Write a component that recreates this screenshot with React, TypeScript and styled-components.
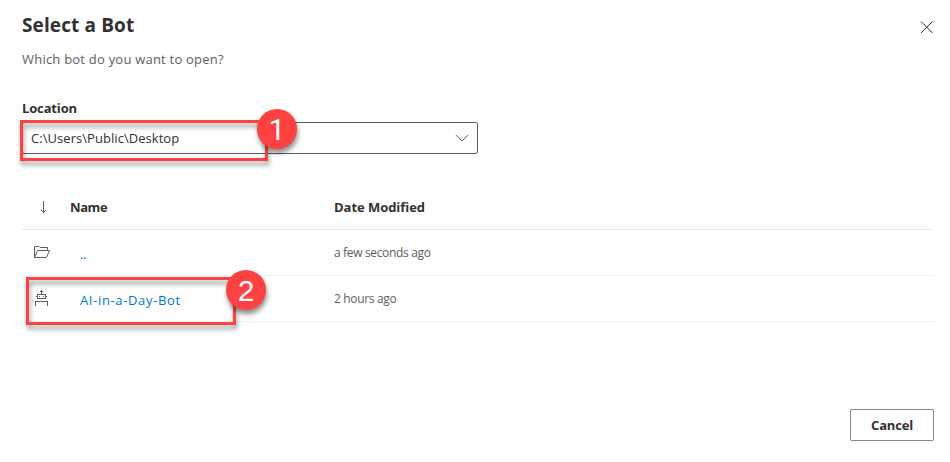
import React from "react";
import styled, { createGlobalStyle } from "styled-components";

const GlobalStyle = createGlobalStyle`
  * { box-sizing: border-box; }
  body {
    margin: 0;
    background: #fff;
    color: #323130;
    font-family: "Open Sans", "Noto Sans", sans-serif;
    font-size: 13px;
  }
`;

const Dialog = styled.main`
  width: 950px;
  height: 462px;
  padding: 11px 16px 21px 22px;
  display: flex;
  flex-direction: column;
  overflow: hidden;
`;

const Header = styled.header`
  display: flex;
  justify-content: space-between;
  height: 28px;
`;

const Title = styled.h1`
  margin: 0;
  font-size: 19px;
  line-height: 28px;
  font-weight: 700;
  letter-spacing: 0.12px;
`;

const CloseButton = styled.button`
  width: 14px;
  height: 14px;
  margin-top: 9px;
  padding: 0;
  border: 0;
  background: none;
  svg { display: block; }
`;

const Subtitle = styled.p`
  margin: 10px 0 0;
  height: 20px;
  line-height: 20px;
  font-size: 13px;
  color: #605e5c;
  letter-spacing: 0.22px;
`;

const Label = styled.label`
  margin-top: 29px;
  height: 20px;
  line-height: 20px;
  font-weight: 700;
  font-size: 13px;
  letter-spacing: -0.15px;
`;

const SelectBox = styled.div`
  position: relative;
  width: 456px;
  height: 32px;
  margin-top: 4px;
  padding: 0 8px;
  border: 1px solid #605e5c;
  border-radius: 2px;
  display: flex;
  align-items: center;
  justify-content: space-between;
  letter-spacing: 0.05px;
`;

const Table = styled.section`
  margin-top: 30px;
  display: flex;
  flex-direction: column;
`;

const Row = styled.div<{ $head?: boolean }>`
  position: relative;
  display: grid;
  grid-template-columns: ${(p) => (p.$head ? "48px 264px" : "58px 254px")} 1fr;
  align-items: center;
  height: 46px;
  border-bottom: 1px solid ${(p) => (p.$head ? "#edebe9" : "#f3f2f1")};
  font-weight: ${(p) => (p.$head ? 700 : 400)};
`;

const HeadLabel = styled.span<{ $spacing: number }>`
  letter-spacing: ${(p) => p.$spacing}px;
`;

const IconCell = styled.div<{ $inset: number; $lift?: number }>`
  padding-left: ${(p) => p.$inset}px;
  padding-bottom: ${(p) => p.$lift ?? 0}px;
  svg { display: block; }
`;

const FileLink = styled.a<{ $spacing: number }>`
  color: #0078d4;
  padding-top: 3px;
  letter-spacing: ${(p) => p.$spacing}px;
`;

const Modified = styled.span`
  font-size: 12px;
  color: #605e5c;
  letter-spacing: -0.34px;
`;

const Footer = styled.footer`
  margin-top: auto;
  display: flex;
  justify-content: flex-end;
`;

const CancelButton = styled.button`
  width: 84px;
  height: 32px;
  padding: 0;
  border: 1px solid #8a8886;
  border-radius: 2px;
  background: #fff;
  color: #323130;
  font: 700 13px "Open Sans", "Noto Sans", sans-serif;
  letter-spacing: -0.2px;
`;

const Highlight = styled.div<{ $x: number; $y: number; $w: number; $h: number }>`
  position: absolute;
  z-index: 1;
  left: ${(p) => p.$x}px;
  top: ${(p) => p.$y}px;
  width: ${(p) => p.$w}px;
  height: ${(p) => p.$h}px;
  border: 3px solid #ff4141;
  filter: drop-shadow(1px 4px 2.5px rgba(0, 0, 0, 0.42));
`;

const Badge = styled.div<{ $x: number; $y: number; $font: string }>`
  position: absolute;
  z-index: 2;
  left: ${(p) => p.$x}px;
  top: ${(p) => p.$y}px;
  width: 40px;
  height: 40px;
  border-radius: 50%;
  background: #ff4141;
  color: #fff;
  font: 30px/41px ${(p) => p.$font}, sans-serif;
  letter-spacing: 0;
  text-align: center;
  box-shadow: 1px 4px 5px rgba(0, 0, 0, 0.45);
`;

const CloseIcon = () => (
  <svg width="14" height="14" viewBox="0 0 14 14" fill="none" stroke="#323130" strokeWidth="1">
    <path d="M1 1.500 12.500 13M12.500 1.500 1 13" />
  </svg>
);

const ChevronIcon = () => (
  <svg width="14" height="8" viewBox="0 0 14 8" fill="none" stroke="#605e5c" strokeWidth="1">
    <path d="M.8 1 7 7l6.200-6" />
  </svg>
);

const ArrowIcon = () => (
  <svg width="8" height="14" viewBox="0 0 8 14" fill="none" stroke="#605e5c" strokeWidth="1">
    <path d="M3.500 1v12M.8 9.800 3.500 12.500l2.700-2.700" />
  </svg>
);

const FolderIcon = () => (
  <svg width="17" height="13" viewBox="0 0 17 13" fill="none" stroke="#605e5c" strokeWidth="1">
    <path d="M.5 11.500V.5h4.500l1 1h7.500v3M.5 11.500 3.500 4.500h12l-3 7z" />
  </svg>
);

const BotIcon = () => (
  <svg width="13" height="16" viewBox="0 0 13 16" fill="none" stroke="#605e5c" strokeWidth="1" shapeRendering="crispEdges">
    <path d="M6.500 0v4M5 1.500h3M2.500 4.500h8v4h-8zM1 6.500h1M11 6.500h1M.5 16v-4.500h12V16" />
    <path d="M4 6.500h1M8 6.500h1" />
  </svg>
);

export default function App() {
  return (
    <>
      <GlobalStyle />
      <Dialog>
        <Header>
          <Title>Select a Bot</Title>
          <CloseButton aria-label="Close"><CloseIcon /></CloseButton>
        </Header>
        <Subtitle>Which bot do you want to open?</Subtitle>
        <Label>Location</Label>
        <SelectBox>
          <span>C:\Users\Public\Desktop</span>
          <ChevronIcon />
          <Highlight $x={-3} $y={-3} $w={248} $h={41} />
          <Badge $x={234} $y={-14} $font="Roboto">1</Badge>
        </SelectBox>
        <Table>
          <Row $head>
            <IconCell $inset={18}><ArrowIcon /></IconCell>
            <HeadLabel $spacing={-0.4}>Name</HeadLabel>
            <HeadLabel $spacing={-0.05}>Date Modified</HeadLabel>
          </Row>
          <Row>
            <IconCell $inset={12}><FolderIcon /></IconCell>
            <FileLink $spacing={-0.3}>..</FileLink>
            <Modified>a few seconds ago</Modified>
          </Row>
          <Row>
            <IconCell $inset={13} $lift={1}><BotIcon /></IconCell>
            <FileLink $spacing={0.64}>AI-in-a-Day-Bot</FileLink>
            <Modified>2 hours ago</Modified>
            <Highlight $x={4} $y={1} $w={210} $h={48} />
            <Badge $x={204} $y={-6} $font={'"Liberation Sans"'}>2</Badge>
          </Row>
        </Table>
        <Footer><CancelButton>Cancel</CancelButton></Footer>
      </Dialog>
    </>
  );
}
